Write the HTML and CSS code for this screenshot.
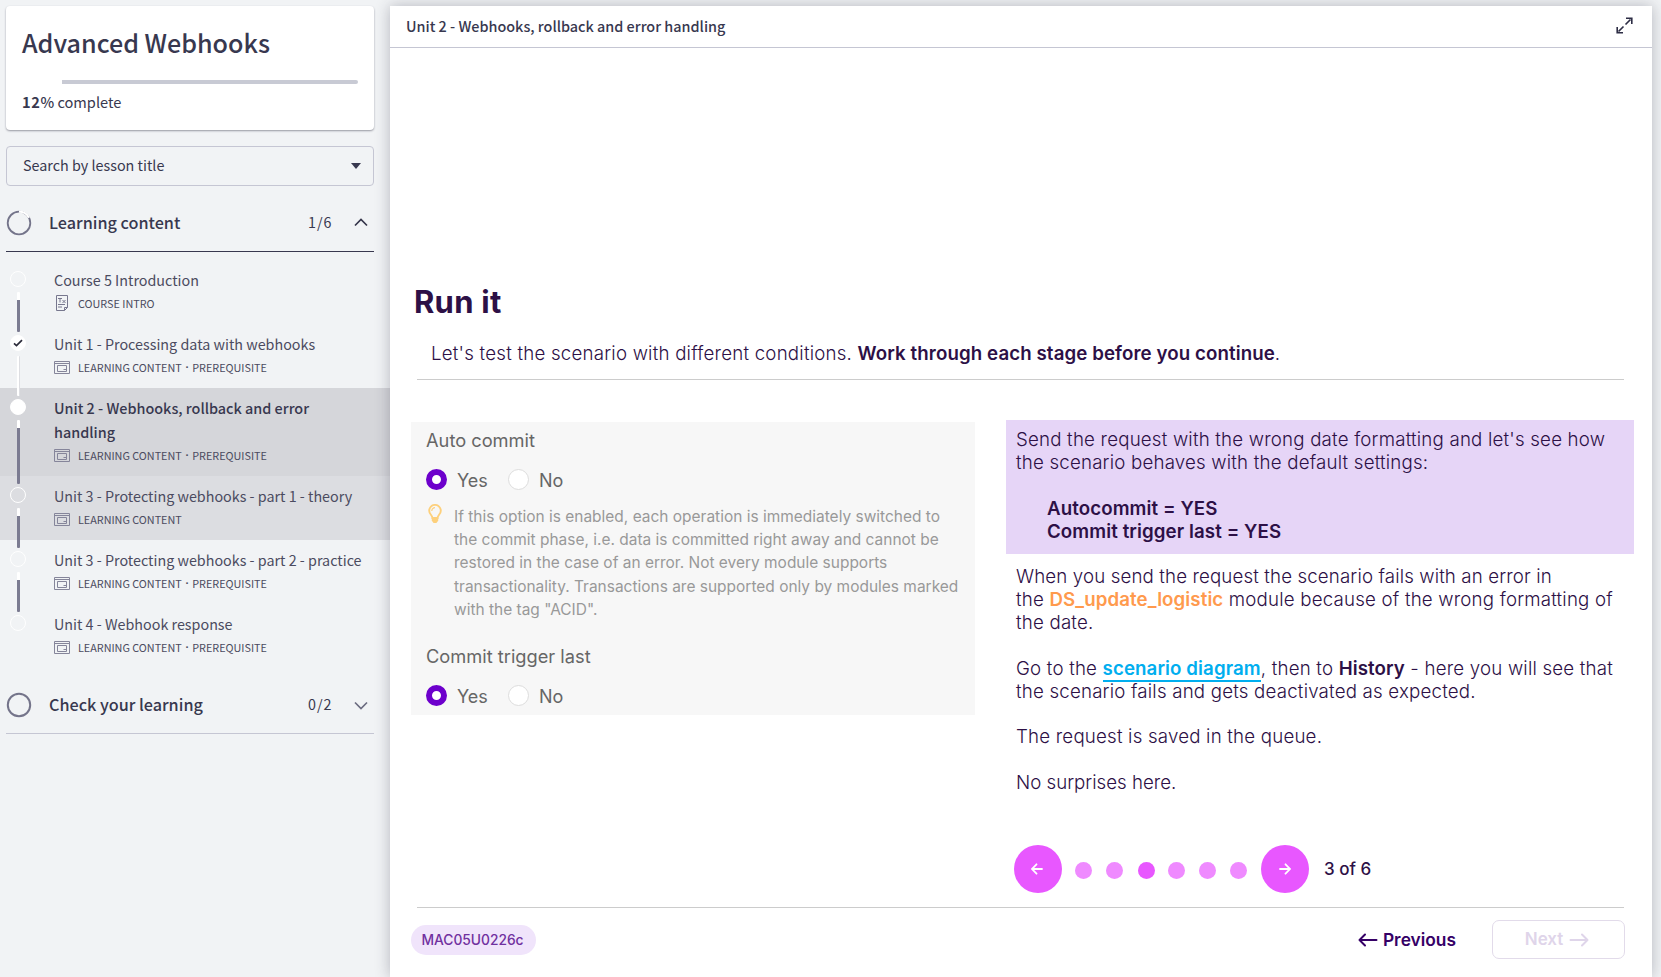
FILE: index.html
```html
<!DOCTYPE html>
<html lang="en">
<head>
<meta charset="utf-8">
<title>Advanced Webhooks</title>
<link rel="stylesheet" href="styles.css">
</head>
<body>
<svg class="defs" width="0" height="0">
  <defs>
    <symbol id="lesson" viewBox="0 0 16 13"><g fill="none" stroke="#85859a"><path d="M.5.5h15v12H.5zM.5 2.500h15"/><path d="M3.500 4.500h9v6h-9zM9.500 8.500h3"/></g></symbol>
    <symbol id="left" viewBox="0 0 20 14"><path d="M18.500 7H1.500M7 1.500L1.500 7 7 12.500" fill="none" stroke="currentColor" stroke-width="2" stroke-linecap="round" stroke-linejoin="round"/></symbol>
    <symbol id="right" viewBox="0 0 20 14"><path d="M1.500 7h17M13 1.500L18.500 7 13 12.500" fill="none" stroke="currentColor" stroke-width="2" stroke-linecap="round" stroke-linejoin="round"/></symbol>
    <symbol id="bulb" viewBox="0 0 14 20"><path d="M4.400 14c0-3-3.200-3.600-3.200-7.300a5.800 5.800 0 0 1 11.600 0c0 3.700-3.200 4.300-3.200 7.300z" fill="none" stroke="#fdd07c" stroke-width="1.900"/><path d="M3.800 7a3.200 3.200 0 0 1 3.200-3.300" fill="none" stroke="#fdd07c" stroke-width="1.200"/><path d="M3.800 14h6.400v2.800L8.400 19H5.600l-1.800-2.200z" fill="#fdd07c"/></symbol>
  </defs>
</svg>
<div class="app">
  <aside class="sidebar">
    <section class="card">
      <h1 class="course"><span>Advanced Webhooks</span></h1>
      <div class="progress"><div class="progress-done"></div></div>
      <p class="complete"><b>12</b><span class="pct">%</span> complete</p>
    </section>
    <div class="search"><span>Search by lesson title</span><i class="caret"></i></div>
    <div class="section open">
      <svg class="ring" width="26" height="26" viewBox="0 0 26 26"><circle cx="13" cy="13" r="11.300" fill="none" stroke="#74748a" stroke-width="1.800"/><path d="M13 1.700a11.300 11.300 0 0 1 10 6" fill="none" stroke="#fff" stroke-width="2.200"/></svg>
      <h2 class="section-title">Learning content</h2><span class="count">1/6</span>
      <svg class="chev" width="14" height="9" viewBox="0 0 14 9"><path d="M1 7.500l6-6 6 6" fill="none" stroke="#35354a" stroke-width="1.700"/></svg>
    </div>
    <ul class="lessons">
      <li class="lesson"><i class="dot"></i><i class="rail"></i>
        <div class="name">Course 5 Introduction</div>
        <div class="meta"><svg class="doc" width="16" height="16" viewBox="0 0 16 16"><g fill="none" stroke="#77778e"><path d="M10.500 15.500h-8V.5h11v12l-3 3v-3h3"/><path d="M4 9.500h7M4 12h4"/><path d="M4 3.500h4M6 3.500v4M8.500 5l3 3M11.500 5l-3 3"/></g></svg>COURSE INTRO</div></li>
      <li class="lesson"><i class="dot full"><svg width="10" height="8" viewBox="0 0 10 8"><path d="M1 4.300l2.500 2.300L9 1.200" fill="none" stroke="#2b2b3a" stroke-width="1.700"/></svg></i><i class="rail done"></i>
        <div class="name">Unit 1 - Processing data with webhooks</div>
        <div class="meta"><svg width="16" height="13"><use href="#lesson"/></svg>LEARNING CONTENT<span class="sep">·</span>PREREQUISITE</div></li>
      <li class="lesson current"><i class="dot full"></i><i class="rail"></i>
        <div class="name">Unit 2 - Webhooks, rollback and error<br>handling</div>
        <div class="meta"><svg width="16" height="13"><use href="#lesson"/></svg>LEARNING CONTENT<span class="sep">·</span>PREREQUISITE</div></li>
      <li class="lesson hovered"><i class="dot"></i><i class="rail"></i>
        <div class="name">Unit 3 - Protecting webhooks - part 1 - theory</div>
        <div class="meta"><svg width="16" height="13"><use href="#lesson"/></svg>LEARNING CONTENT</div></li>
      <li class="lesson"><i class="dot"></i><i class="rail"></i>
        <div class="name">Unit 3 - Protecting webhooks - part 2 - practice</div>
        <div class="meta"><svg width="16" height="13"><use href="#lesson"/></svg>LEARNING CONTENT<span class="sep">·</span>PREREQUISITE</div></li>
      <li class="lesson"><i class="dot"></i>
        <div class="name">Unit 4 - Webhook response</div>
        <div class="meta"><svg width="16" height="13"><use href="#lesson"/></svg>LEARNING CONTENT<span class="sep">·</span>PREREQUISITE</div></li>
    </ul>
    <div class="section closed">
      <svg class="ring" width="26" height="26" viewBox="0 0 26 26"><circle cx="13" cy="13" r="11.200" fill="none" stroke="#74748a" stroke-width="2"/></svg>
      <h2 class="section-title">Check your learning</h2><span class="count">0/2</span>
      <svg class="chev" width="14" height="9" viewBox="0 0 14 9"><path d="M1 1.500l6 6 6-6" fill="none" stroke="#6c6c80" stroke-width="1.700"/></svg>
    </div>
  </aside>
  <main class="main">
    <header class="head"><span class="head-title">Unit 2 - Webhooks, rollback and error handling</span>
      <svg width="17" height="17" viewBox="0 0 17 17"><path d="M9.500 7.500l5-5M7.500 9.500l-5 5" stroke="#2d2d45" stroke-width="1.600"/><path d="M10 1.200h5.800V7M1.200 10v5.800H7" fill="none" stroke="#2d2d45" stroke-width="1.600"/></svg>
    </header>
    <div class="slide">
      <h3 class="run">Run it</h3>
      <p class="intro">Let's test the scenario with different conditions. <b>Work through each stage before you continue</b>.</p>
      <div class="columns">
        <section class="settings">
          <div class="label">Auto commit</div>
          <div class="radios"><i class="radio on"></i><span class="yes">Yes</span><i class="radio"></i><span>No</span></div>
          <div class="hint"><svg width="14" height="20"><use href="#bulb"/></svg><p class="hint-text">If this option is enabled, each operation is immediately switched to<br>the commit phase, i.e. data is committed right away and cannot be<br>restored in the case of an error. Not every module supports<br>transactionality. Transactions are supported only by modules marked<br>with the tag "ACID".</p></div>
          <div class="label">Commit trigger last</div>
          <div class="radios"><i class="radio on"></i><span class="yes">Yes</span><i class="radio"></i><span>No</span></div>
        </section>
        <section class="story">
          <div class="task">
            <p>Send the request with the wrong date formatting and let's see how<br>the scenario behaves with the default settings:</p>
            <p class="values"><b>Autocommit = YES</b><br><b>Commit trigger last = YES</b></p>
          </div>
          <div class="notes">
            <p><span class="lead">When you send the request the scenario fails with an error in</span><br>the <b class="module">DS_update_logistic</b> module because of the wrong formatting of<br>the date.</p>
            <p>Go to the <a class="link">scenario diagram</a>, then to <b>History</b> - here you will see that<br>the scenario fails and gets deactivated as expected.</p>
            <p>The request is saved in the queue.</p>
            <p class="short">No surprises here.</p>
          </div>
          <div class="pager">
            <span class="round"><svg width="12" height="12" viewBox="0 0 12 12"><path d="M11 6H1M5.500 1.300L1 6l4.500 4.700" fill="none" stroke="#fff" stroke-width="1.800" stroke-linecap="round"/></svg></span>
            <span class="dots"><i></i><i></i><i class="active"></i><i></i><i></i><i></i></span>
            <span class="round"><svg width="12" height="12" viewBox="0 0 12 12"><path d="M1 6h10M6.500 1.300L11 6l-4.500 4.700" fill="none" stroke="#fff" stroke-width="1.800" stroke-linecap="round"/></svg></span>
            <span class="page">3 of 6</span>
          </div>
        </section>
      </div>
      <footer class="foot">
        <span class="tag">MAC05U0226c</span>
        <span class="prev"><svg width="20" height="14"><use href="#left"/></svg>Previous</span>
        <span class="next">Next<svg width="20" height="14"><use href="#right"/></svg></span>
      </footer>
    </div>
  </main>
</div>
</body>
</html>
```
FILE: styles.css
```css
* { box-sizing: border-box; }
html, body { height: 100%; }
body { margin: 0; overflow: hidden; background: #f1f3f5; color: #38384f; font-family: "Noto Sans CJK SC", "Noto Sans", sans-serif; }
h1, h2, h3, p, ul { margin: 0; padding: 0; }
i { display: block; }
svg { display: block; flex: none; }
.defs { position: absolute; }
.app { display: flex; height: 977px; }
.sidebar { width: 390px; flex: none; padding-top: 6px; }
.card { margin-left: 6px; width: 368px; height: 124px; padding: 16px 16px 0; background: #fff; border-radius: 4px; box-shadow: 0 1px 2px rgba(40, 40, 60, .45); }
.course { font-size: 25.100px; line-height: 40px; font-weight: 500; white-space: nowrap; }
.progress { height: 4px; margin-top: 18px; background: #c8cad4; border-radius: 2px; }
.progress-done { width: 40px; height: 4px; background: #fff; }
.complete { font-size: 14.600px; line-height: 24px; margin-top: 6px; }
.complete b { font-weight: 700; letter-spacing: .6px; }
.pct { font-weight: 500; }
.search { margin: 16px 0 0 6px; width: 368px; height: 40px; padding: 0 12px 2px 16px; border: 1px solid #c5c6d3; border-radius: 4px; display: flex; align-items: center; justify-content: space-between; font-size: 14.350px; line-height: 24px; }
.caret { border: 5px solid transparent; border-top: 6px solid #38384f; border-bottom: 0; margin-top: 1px; }
.section { margin-left: 6px; width: 368px; display: flex; align-items: center; }
.open { height: 66px; border-bottom: 1px solid #38384f; padding-top: 8px; }
.open .section-title, .open .count { margin-top: -1px; }
.closed { height: 66px; border-bottom: 1px solid #c5c6d3; padding-top: 9px; }
.closed .section-title, .closed .count { margin-top: -2px; }
.section-title { font-size: 16.200px; line-height: 24px; font-weight: 500; margin-left: 17px; flex: 1; }
.count { font-size: 14.300px; line-height: 24px; letter-spacing: 1px; width: 24px; white-space: nowrap; }
.chev { margin: 0 6px 0 22px; }
.lessons { list-style: none; margin-top: 8px; }
.lesson { position: relative; padding: 8px 0 10px 54px; color: #4b4b60; white-space: nowrap; }
.name { font-size: 14.330px; line-height: 24px; }
.current .name { font-weight: 500; color: #38384f; font-size: 14.400px; }
.current { background: #d5d6da; }
.hovered { background: #dcdde1; }
.meta { display: flex; align-items: center; height: 22px; font-size: 10.800px; line-height: 22px; }
.meta svg { margin-right: 8px; }
.sep { width: 10.500px; text-align: center; font-family: "Noto Sans", sans-serif; font-weight: 700; }
.dot { position: absolute; left: 10px; top: 11px; width: 16px; height: 16px; border-radius: 50%; border: 1px solid #fff; z-index: 1; }
.full { background: #fff; display: flex; align-items: center; justify-content: center; }
.rail { position: absolute; left: 17px; top: 32px; bottom: -8px; width: 3px; background: linear-gradient(#fff 8px, #7b7b91 8px); border-radius: 1px; z-index: 1; }
.rail.done { background: #fff; border: solid #dddee2; border-width: 0 1px 0 0; }
.main { width: 1262px; margin-top: 6px; background: #fff; box-shadow: 0 0 14px rgba(40, 40, 60, .3); z-index: 2; display: flex; flex-direction: column; }
.head { height: 42px; border-bottom: 1px solid #c5c6d3; display: flex; align-items: center; justify-content: space-between; padding: 0 19px 2px 16px; }
.head-title { font-size: 14.400px; line-height: 24px; font-weight: 500; }
.slide { font-family: Inter, sans-serif; color: #2d1046; flex: 1; padding: 234px 0 0 21px; font-size: 18.700px; line-height: 23px; font-weight: 300; letter-spacing: .195px; white-space: nowrap; }
.slide b { font-weight: 600; letter-spacing: .09px; }
.run { font-size: 31px; line-height: 40px; font-weight: 700; letter-spacing: .25px; margin-left: 3px; }
.intro { margin: 0 28px 0 6px; padding: 20px 0 0 14px; height: 58px; border-bottom: 1px solid #ccc; letter-spacing: .215px; }
.columns { display: flex; margin-top: 40px; gap: 31px; height: 487px; }
.settings { width: 564px; height: 293px; margin-top: 2px; background: #f7f7f7; padding: 6px 15px 0; font-weight: 400; color: #666; letter-spacing: 0; }
.label { font-size: 18.250px; line-height: 24px; }
.radios { display: flex; align-items: center; height: 22px; margin-top: 16px; font-size: 18px; }
.radios span { margin-top: 2px; }
.radio { width: 21px; height: 21px; border-radius: 50%; background: #fff; border: 1px solid #ddd; margin-right: 10px; }
.radio.on { border: 6.500px solid #6d00cc; }
.yes { width: 51px; }
.hint { display: flex; margin-top: 14px; padding-left: 2px; gap: 12px; }
.hint-text { font-size: 15.480px; line-height: 23.200px; color: #999; margin: 1px 0 23px; }
.story { width: 628px; }
.task { height: 134px; padding: 8px 10px 0; background: #e6d5f7; }
.values { margin-top: 23px; padding-left: 31px; }
.notes { padding: 11px 10px 0; display: flex; flex-direction: column; gap: 22.700px; height: 291px; }
.notes .short { letter-spacing: 0; }
.notes .lead { letter-spacing: .13px; }
.notes .module { color: #ff9a4d; }
.link { color: #00aeef; font-weight: 600; border-bottom: 2px solid #00aeef; letter-spacing: .09px; }
.pager { display: flex; align-items: center; margin: 0 0 0 7.500px; height: 48px; letter-spacing: 0; }
.round { width: 48px; height: 48px; border-radius: 50%; background: #e857ff; color: #fff; display: flex; align-items: center; justify-content: center; padding: 0 1px 1px 0; }
.dots { display: flex; gap: 14.200px; margin: 3px 14px 0 13px; }
.dots i { width: 17px; height: 17px; border-radius: 50%; background: #ef8aff; }
.dots .active { background: #e857ff; margin: 0 -1px 0 1px; }
.page { margin-left: 14.500px; font-size: 17px; font-weight: 500; }
.foot { margin: 0 28px 0 0; height: 70px; display: flex; align-items: center; position: relative; background: linear-gradient(#ccc, #ccc) 6px 0 / 100% 1px no-repeat; letter-spacing: 0; }
.tag { width: 125px; height: 30px; border-radius: 15px; background: #f0e4fb; color: #7030a0; font-size: 13.800px; font-weight: 500; line-height: 30px; text-align: center; margin-top: -4px; padding-right: 2px; }
.prev { margin-left: auto; display: flex; align-items: center; gap: 5px; font-size: 17.350px; font-weight: 600; color: #350066; margin-top: -5px; }
.next { margin: -5px -1px 0 36px; width: 133px; height: 39px; border: 1.500px solid #e2dbea; border-radius: 7px; display: flex; align-items: center; justify-content: center; gap: 6px; color: #dfd5ea; font-size: 17px; font-weight: 600; padding-right: 3px; }
```
